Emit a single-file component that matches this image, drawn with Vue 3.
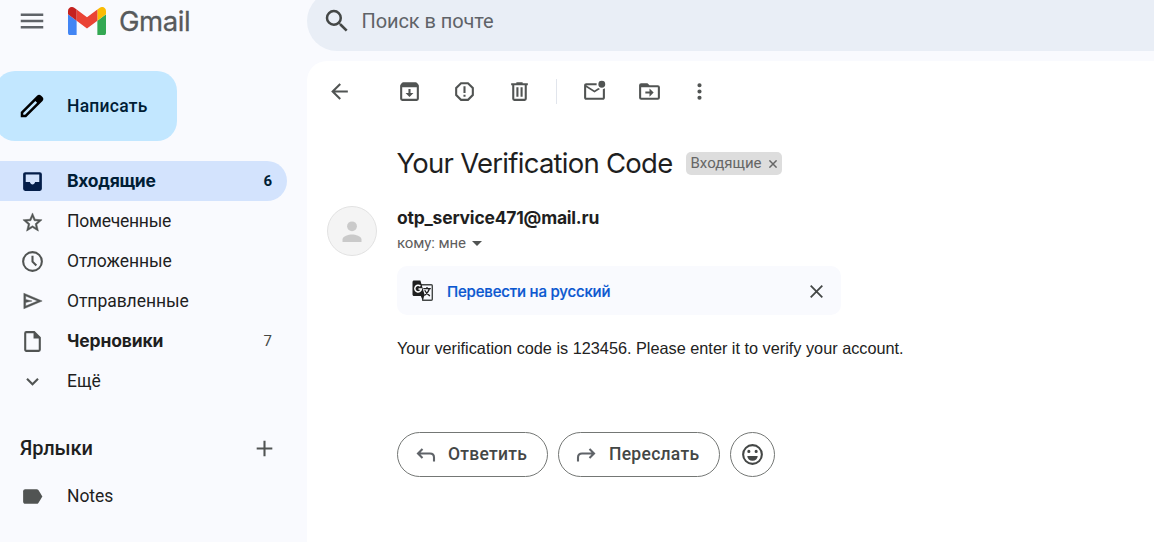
<script setup>
const folders = [
  { id: 'inbox', label: 'Входящие', count: 6, active: true, bold: true, size: 25, d: 'M5 3h14a2 2 0 0 1 2 2v14a2 2 0 0 1-2 2H5a2 2 0 0 1-2-2V5c0-1.1.9-2 2-2zm.5 2.200v7.300h4c.4 1.500 1.300 2.300 2.500 2.300s2.100-.8 2.500-2.300h4V5.200z' },
  { id: 'starred', label: 'Помеченные', size: 23, d: 'M22 9.240l-7.190-.62L12 2 9.190 8.630 2 9.240l5.460 4.730L5.820 21 12 17.270 18.180 21l-1.630-7.030L22 9.240zM12 15.400l-3.760 2.270 1-4.280-3.320-2.880 4.380-.38L12 6.100l1.710 4.040 4.380.38-3.320 2.880 1 4.280L12 15.400z' },
  { id: 'snoozed', label: 'Отложенные', size: 25, d: 'M12 2a10 10 0 1 0 0 20 10 10 0 0 0 0-20zm0 18a8 8 0 1 1 0-16 8 8 0 0 1 0 16zM13 6.500h-2V12.500l4 4 1.400-1.400L13 11.700z' },
  { id: 'sent', label: 'Отправленные', size: 22, d: 'M2 3.500v17L22 12zM4 6.500L17 12 4 17.500v-3.900l7-1.600-7-1.600z' },
  { id: 'drafts', label: 'Черновики', count: 7, bold: true, size: 25, d: 'M14 2H6a2 2 0 0 0-2 2v16c0 1.100.9 2 2 2h12a2 2 0 0 0 2-2V8zM6 20V4h7v5h5v11z' },
  { id: 'more', label: 'Ещё', size: 25, d: 'M16.590 8.590L12 13.170 7.410 8.590 6 10l6 6 6-6z' }
]
const tools = [
  { id: 'back', d: 'M20 11H7.830l5.590-5.590L12 4l-8 8 8 8 1.410-1.410L7.830 13H20v-2z' },
  { id: 'archive', d: 'M20.500 5.200l-1.400-1.700c-.3-.3-.7-.5-1.200-.5H6c-.5 0-.9.2-1.200.6L3.500 5.200C3.200 5.600 3 6 3 6.500V19a2 2 0 0 0 2 2h14a2 2 0 0 0 2-2V6.500c0-.5-.2-.9-.5-1.300zM5 19V8h14v11zM11 9.500h2v4h2.800L12 17.300l-3.800-3.800H11z' },
  { id: 'spam', d: 'M15.730 3H8.270L3 8.270v7.460L8.270 21h7.460L21 15.730V8.270zM19 14.900L14.900 19H9.100L5 14.900V9.100L9.100 5h5.800L19 9.100zM11 7h2v6.500h-2zM11 15h2v2h-2z' },
  { id: 'delete', d: 'M15 4V3H9v1H4v2h1v13a2 2 0 0 0 2 2h10a2 2 0 0 0 2-2V6h1V4zm2 15H7V6h10zM9 8h2v9H9zM13 8h2v9h-2z' },
  { id: 'unread', d: 'M22 8.980V18c0 1.100-.9 2-2 2H4c-1.100 0-2-.9-2-2V6c0-1.100.9-2 2-2h10.100a5 5 0 0 0 0 2H4l8 5 3.670-2.290c.47.43 1.020.76 1.630.98L12 13 4 8v10h16V9.900c.74-.15 1.420-.48 2-.92zM15.700 5a3.300 3.300 0 1 0 6.600 0 3.300 3.300 0 0 0-6.600 0z' },
  { id: 'move', d: 'M20 6h-8l-2-2H4a2 2 0 0 0-2 2v12a2 2 0 0 0 2 2h16a2 2 0 0 0 2-2V8a2 2 0 0 0-2-2zm0 12H4V8h16zM12 17l4-4-4-4v3H8v2h4z' },
  { id: 'menu', d: 'M12 8a2 2 0 1 0 0-4 2 2 0 0 0 0 4zm0 2a2 2 0 1 0 0 4 2 2 0 0 0 0-4zm0 6a2 2 0 1 0 0 4 2 2 0 0 0 0-4z' }
]
</script>

<template>
  <div class="app">
    <aside class="sidebar">
      <div class="brand">
        <svg class="burger" width="30" height="30" viewBox="0 0 24 24"><path d="M3 18h18v-2H3v2zm0-5h18v-2H3v2zm0-7v2h18V6H3z" /></svg>
        <svg class="logo" width="38" height="28.500" viewBox="52 42 88 66">
          <path fill="#4285f4" d="M58 108h14V74L52 59v43c0 3.320 2.690 6 6 6" />
          <path fill="#34a853" d="M120 108h14c3.320 0 6-2.690 6-6V59l-20 15" />
          <path fill="#fbbc04" d="M120 48v26l20-15v-8c0-7.420-8.470-11.650-14.400-7.200" />
          <path fill="#ea4335" d="M72 74V48l24 18 24-18v26L96 92" />
          <path fill="#c5221f" d="M52 51v8l20 15V48l-5.600-4.200c-5.940-4.450-14.400-.22-14.400 7.200" />
        </svg>
        <span class="brand-name">Gmail</span>
      </div>
      <button class="compose">
        <svg width="30" height="30" viewBox="0 0 24 24"><path fill-rule="evenodd" d="M20.400 4.800l-1.300-1.300c-.8-.8-2.100-.8-2.900 0L3 16.700V21h4.300L20.400 7.900c.9-.9.9-2.200 0-3.100zM6.400 19H5v-1.400L14.700 7.900l1.400 1.400z" /></svg>
        <span>Написать</span>
      </button>
      <nav class="folders">
        <div v-for="f in folders" :key="f.id" class="folder" :class="[f.id, { active: f.active, bold: f.bold }]">
          <span class="folder-icon"><svg :width="f.size" :height="f.size" viewBox="0 0 24 24"><path fill-rule="evenodd" :d="f.d" /></svg></span>
          <span class="label">{{ f.label }}</span>
          <span v-if="f.count" class="count">{{ f.count }}</span>
        </div>
      </nav>
      <div class="labels-head">
        <span>Ярлыки</span>
        <svg width="25" height="25" viewBox="0 0 24 24"><path d="M19.500 13H13v6.500h-2V13H4.500v-2H11V4.500h2V11h6.500z" /></svg>
      </div>
      <div class="folder notes">
        <span class="folder-icon"><svg width="25" height="25" viewBox="0 0 24 24"><path d="M3 7v10c0 1.100.9 2 2 2h11c.67 0 1.270-.33 1.630-.84L21.500 12l-3.870-6.160C17.270 5.330 16.670 5 16 5H5c-1.100 0-2 .9-2 2z" /></svg></span>
        <span class="label">Notes</span>
      </div>
    </aside>

    <main class="main">
      <div class="search">
        <svg width="30" height="30" viewBox="0 0 24 24"><path d="M15.500 14h-.79l-.28-.27A6.470 6.470 0 0 0 16 9.500 6.500 6.500 0 1 0 9.500 16c1.610 0 3.090-.59 4.230-1.570l.27.28v.79l5 4.990L20.490 19l-4.990-5zm-6 0a4.500 4.500 0 1 1 0-9 4.500 4.500 0 0 1 0 9z" /></svg>
        <span>Поиск в почте</span>
      </div>
      <section class="panel">
        <div class="toolbar">
          <span v-for="t in tools" :key="t.id" class="tool" :class="t.id">
            <svg viewBox="0 0 24 24"><path fill-rule="evenodd" :d="t.d" /></svg>
          </span>
        </div>
        <header class="subject">
          <h1>Your Verification Code</h1>
          <span class="chip"><span>Входящие</span><svg width="8" height="8" viewBox="0 0 8 8"><path d="M.4.4l7.200 7.200M7.600.4L.4 7.600" /></svg></span>
        </header>
        <div class="message">
          <svg class="avatar" width="50" height="50" viewBox="0 0 50 50">
            <circle cx="25" cy="25" r="24.500" fill="#f4f4f4" stroke="#e2e2e2" />
            <circle cx="25" cy="20.300" r="4.900" fill="#cacaca" />
            <path fill="#cacaca" d="M15.500 36v-2.500c0-3.200 6.200-5 9.500-5s9.500 1.800 9.500 5V36z" />
          </svg>
          <div class="content">
            <div class="sender">otp_service471@mail.ru</div>
            <div class="recipient"><span>кому: мне</span><i class="caret"></i></div>
            <div class="translate">
              <svg width="22" height="22" viewBox="0 0 22 22">
                <path fill="none" stroke="#444746" stroke-width="1.400" d="M9 4.700h10.300c.6 0 1 .4 1 1v13.600c0 .6-.4 1-1 1h-8.500z" />
                <path fill="#1f1f1f" d="M2 .5h6.400L12.600 15l-1.800 5-2-4H2C1.200 16 .5 15.300.5 14.500V2C.5 1.200 1.200.5 2 .5z" />
                <path fill="none" stroke="#fff" stroke-width="1.500" d="M8.400 6.200a3.300 3.300 0 1 0 1 2.800H6.500" />
                <path fill="none" stroke="#1f1f1f" stroke-width="1.300" d="M11.300 8.700h7.500M15 7v1.700M17.400 8.700c-.6 2.700-2.500 4.800-5 6.700M12.700 10.300c1 2.300 2.800 4.200 5.200 5.600" />
              </svg>
              <span>Перевести на русский</span>
              <svg class="close" width="13" height="13" viewBox="0 0 13 13"><path d="M.7.7l11.600 11.600M12.300.7L.7 12.300" /></svg>
            </div>
            <p class="body">Your verification code is 123456. Please enter it to verify your account.</p>
            <div class="actions">
              <button class="reply">
                <svg width="20" height="16" viewBox="0 0 20 16"><path d="M6.500 2L2 6.500 6.500 11M2 6.500h12c2.500 0 4 1.500 4 4v4" /></svg>
                <span>Ответить</span>
              </button>
              <button class="forward">
                <svg width="20" height="16" viewBox="0 0 20 16"><path d="M13.500 2L18 6.500 13.500 11M18 6.500H6c-2.500 0-4 1.500-4 4v4" /></svg>
                <span>Переслать</span>
              </button>
              <button class="emoji">
                <svg width="25" height="25" viewBox="0 0 24 24"><path fill-rule="evenodd" d="M12 2a10 10 0 1 0 0 20 10 10 0 0 0 0-20zm0 18a8 8 0 1 1 0-16 8 8 0 0 1 0 16zM15.500 7.500a1.500 1.500 0 1 0 0 3 1.500 1.500 0 0 0 0-3zM8.500 7.500a1.500 1.500 0 1 0 0 3 1.500 1.500 0 0 0 0-3zM7 13.500h10a5 4.500 0 0 1-10 0z" /></svg>
              </button>
            </div>
          </div>
        </div>
      </section>
    </main>
  </div>
</template>

<style>
body { overflow: hidden; }
</style>

<style scoped>
.app { display: flex; width: 1154px; height: 542px; overflow: hidden; background: #f9fafe; color: #1f1f1f; font: 17.5px/24px Roboto, "Liberation Sans", sans-serif; }
svg { display: block; flex: none; fill: #515453; }
button { box-sizing: border-box; display: flex; align-items: center; border: 0; padding: 0; color: inherit; font: inherit; letter-spacing: inherit; }

.sidebar { width: 307px; flex: none; }
.brand { display: flex; height: 71px; align-items: flex-start; }
.burger { margin: 6px 21px 0 17px; fill: #5f6368; }
.logo { margin-top: 6.5px; }
.brand-name { margin: 3px 0 0 13px; font: 27.5px/36px Inter, sans-serif; letter-spacing: -.4px; color: #575a5c; -webkit-text-stroke: .3px #575a5c; }
.compose { width: 182px; height: 70px; margin-left: -5px; padding-left: 22px; gap: 20px; border-radius: 20px; background: #c2e7ff; color: #001d35; font-weight: 500; letter-spacing: .24px; }
.compose svg { fill: #000; }
.folders { margin-top: 20px; }
.folder { display: flex; align-items: center; box-sizing: border-box; width: 287px; height: 40px; padding-right: 15px; border-radius: 0 20px 20px 0; }
.folder-icon { display: flex; justify-content: center; width: 65px; margin-right: 2px; }
.starred .folder-icon { padding-top: 2px; }
.starred svg, .sent svg { stroke: #515453; stroke-width: .5; }
.label { flex: 1; letter-spacing: -.05px; }
.starred .label { letter-spacing: -.25px; }
.bold .label { font-family: Inter, sans-serif; font-weight: 700; letter-spacing: -.15px; }
.inbox .label { letter-spacing: -.28px; }
.count { font-size: 15px; color: #444746; }
.active { background: #d3e3fd; color: #001d35; }
.active svg { fill: #041e49; }
.active .count { font-weight: 700; color: #001d35; }
.labels-head { display: flex; align-items: center; justify-content: space-between; width: 257px; height: 40px; margin: 27px 0 8px 20px; font-size: 20px; font-weight: 500; letter-spacing: -.1px; }

.main { flex: 1; display: flex; flex-direction: column; }
.search { display: flex; align-items: center; height: 60px; margin-top: -9px; padding-left: 15px; gap: 9.5px; border-radius: 30px 0 0 30px; background: #e9eef6; color: #5f6368; font-size: 20px; letter-spacing: -.08px; box-sizing: border-box; flex: none; }
.search svg { fill: #444746; }
.panel { flex: 1; margin-top: 10px; border-radius: 20px 0 0; background: #fff; }
.toolbar { display: flex; align-items: center; height: 61px; padding-left: 20px; }
.tool { display: flex; justify-content: center; width: 25px; margin-right: 30px; }
.tool svg { width: 25px; height: 25px; }
.back { margin-right: 45px; }
.delete { margin-right: 24px; }
.unread { margin-right: 30px; padding-left: 25px; border-left: 1px solid #e1e5ec; }
.move { margin-right: 25px; }
.subject { display: flex; align-items: center; height: 44px; margin: 19px 0 0 90px; }
h1 { margin: 0 0 0 -.5px; font: 400 27.5px/36px Inter, sans-serif; letter-spacing: -.74px; }
.chip { display: flex; align-items: center; box-sizing: border-box; width: 96px; height: 23px; margin-left: 13.5px; padding-left: 4.5px; gap: 7px; border-radius: 5px; background: #ddd; color: #666; font-size: 15px; }
.chip svg { fill: none; stroke: #666; stroke-width: 1.500; margin-top: 2px; }
.message { display: flex; margin: 21px 0 0 20px; gap: 20px; }
.sender { font: 700 17.5px/24px Inter, sans-serif; letter-spacing: -.22px; }
.recipient { display: flex; align-items: center; gap: 6px; height: 26px; color: #5e5e5e; font-size: 15px; letter-spacing: -.1px; }
.caret { border: 5.5px solid transparent; border-top-color: #515453; border-bottom: 0; margin-top: 1px; }
.translate { display: flex; align-items: center; box-sizing: border-box; width: 444px; height: 49px; margin-top: 10px; padding: 1px 18px 0 15px; gap: 13px; border-radius: 10px; background: #f9fafe; color: #0b57d0; font: 500 15px/24px Inter, sans-serif; letter-spacing: -.19px; }
.translate span { padding-top: 1px; -webkit-text-stroke: .2px #0b57d0; }
.close { margin-left: auto; fill: none; stroke: #444746; stroke-width: 1.800; }
.body { margin: 21px 0 0; color: #222; font: 16.28px/24px "Liberation Sans", Arial, sans-serif; }
.actions { display: flex; gap: 10px; margin-top: 72px; color: #444746; font-weight: 500; letter-spacing: .28px; }
.actions button { height: 45px; border: 1px solid #747775; border-radius: 23px; background: #fff; }
.actions .reply, .actions .forward { width: 151px; padding-left: 18px; gap: 12px; }
.actions .forward { width: 162px; padding-left: 17px; gap: 13px; }
.actions span { margin-top: -2px; }
.actions .emoji { width: 45px; justify-content: center; }
.emoji svg { fill: #444746; }
.reply svg, .forward svg { fill: none; stroke: #5f6368; stroke-width: 2.1; }
</style>
